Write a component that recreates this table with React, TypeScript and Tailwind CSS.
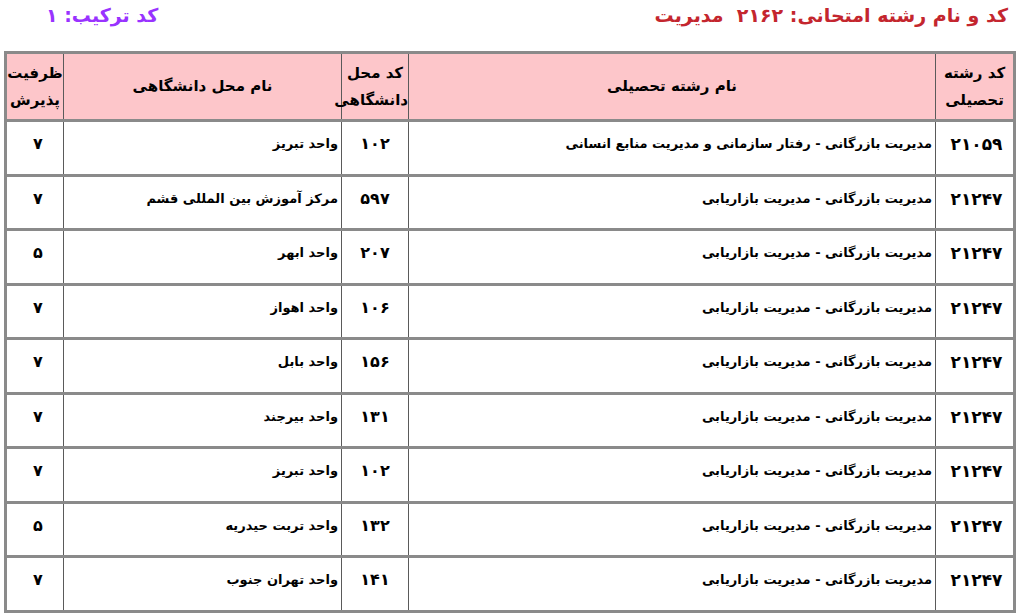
const rows = [
  { code: "۲۱۰۵۹", field: "مدیریت بازرگانی - رفتار سازمانی و مدیریت منابع انسانی", uni: "۱۰۲", place: "واحد تبریز", cap: "۷" },
  { code: "۲۱۲۴۷", field: "مدیریت بازرگانی - مدیریت بازاریابی", uni: "۵۹۷", place: "مرکز آموزش بین المللی قشم", cap: "۷" },
  { code: "۲۱۲۴۷", field: "مدیریت بازرگانی - مدیریت بازاریابی", uni: "۲۰۷", place: "واحد ابهر", cap: "۵" },
  { code: "۲۱۲۴۷", field: "مدیریت بازرگانی - مدیریت بازاریابی", uni: "۱۰۶", place: "واحد اهواز", cap: "۷" },
  { code: "۲۱۲۴۷", field: "مدیریت بازرگانی - مدیریت بازاریابی", uni: "۱۵۶", place: "واحد بابل", cap: "۷" },
  { code: "۲۱۲۴۷", field: "مدیریت بازرگانی - مدیریت بازاریابی", uni: "۱۳۱", place: "واحد بیرجند", cap: "۷" },
  { code: "۲۱۲۴۷", field: "مدیریت بازرگانی - مدیریت بازاریابی", uni: "۱۰۲", place: "واحد تبریز", cap: "۷" },
  { code: "۲۱۲۴۷", field: "مدیریت بازرگانی - مدیریت بازاریابی", uni: "۱۳۲", place: "واحد تربت حیدریه", cap: "۵" },
  { code: "۲۱۲۴۷", field: "مدیریت بازرگانی - مدیریت بازاریابی", uni: "۱۴۱", place: "واحد تهران جنوب", cap: "۷" },
];

export default function App() {
  return (
    <div
      dir="rtl"
      className="w-[1018px] h-[615px] overflow-hidden bg-white text-black"
      style={{ fontFamily: '"DejaVu Sans", Tahoma, sans-serif' }}
    >
      <div className="flex items-center justify-between h-[30px] pr-[10px] pl-[46px]">
        <h1 className="text-[19px] font-bold text-[#c4262e] leading-none">
          کد و نام رشته امتحانی: ۲۱۶۲&nbsp; مدیریت
        </h1>
        <h2 className="text-[19px] font-bold text-[#9933ff] leading-none">کد ترکیب: ۱</h2>
      </div>

      <table className="mt-[21px] mr-[2px] w-[1010px] table-fixed border-collapse border-[3px] border-[#8a8a8a]">
        <colgroup>
          <col className="w-[79px]" />
          <col className="w-[527px]" />
          <col className="w-[67px]" />
          <col className="w-[278px]" />
          <col className="w-[58px]" />
        </colgroup>
        <thead>
          <tr className="h-[68px] bg-[#fdc6ca] border-b-[3px] border-[#8a8a8a] text-[15px] font-bold leading-[27px]">
            <th className="border-l border-[#5a5a5a] font-bold">کد رشته<br />تحصیلی</th>
            <th className="border-l border-[#5a5a5a] font-bold">نام رشته تحصیلی</th>
            <th className="border-l border-[#5a5a5a] font-bold">کد محل<br />دانشگاهی</th>
            <th className="border-l border-[#5a5a5a] font-bold">نام محل دانشگاهی</th>
            <th className="font-bold">ظرفیت<br />پذیرش</th>
          </tr>
        </thead>
        <tbody className="text-[13px] font-bold">
          {rows.map((r, i) => (
            <tr key={i} className="h-[54.5px] border-b-[3px] border-[#8a8a8a] align-top">
              <td className="border-l border-[#5a5a5a] text-center pt-[10px] text-[17px] pl-[4px]">{r.code}</td>
              <td className="border-l border-[#5a5a5a] text-right pt-[12px] pr-[3px]">{r.field}</td>
              <td className="border-l border-[#5a5a5a] text-center pt-[10px] text-[16px]">{r.uni}</td>
              <td className="border-l border-[#5a5a5a] text-right pt-[12px] pr-[3px]">{r.place}</td>
              <td className="text-center pt-[10px] text-[16px] pl-[6px]">{r.cap}</td>
            </tr>
          ))}
        </tbody>
      </table>
    </div>
  );
}
